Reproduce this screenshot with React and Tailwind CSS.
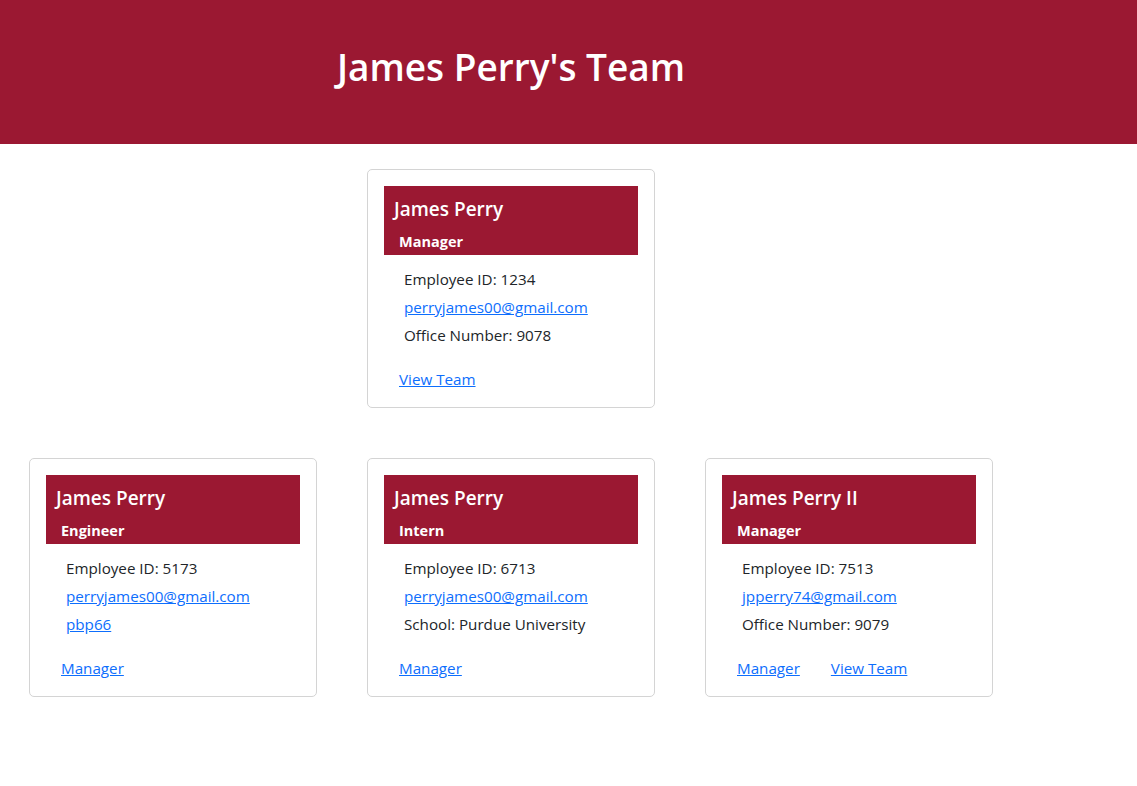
import React from 'react'

const MANAGER = {
  name: 'James Perry',
  role: 'Manager',
  id: '1234',
  email: 'perryjames00@gmail.com',
  extra: 'Office Number: 9078',
  links: ['View Team'],
}

const TEAM = [
  { name: 'James Perry', role: 'Engineer', id: '5173', email: 'perryjames00@gmail.com', github: 'pbp66', links: ['Manager'] },
  { name: 'James Perry', role: 'Intern', id: '6713', email: 'perryjames00@gmail.com', extra: 'School: Purdue University', links: ['Manager'] },
  { name: 'James Perry II', role: 'Manager', id: '7513', email: 'jpperry74@gmail.com', extra: 'Office Number: 9079', links: ['Manager', 'View Team'] },
]

function Card({ person }) {
  return (
    <div className="w-[288px] rounded-[5px] border border-[#d4d4d4] bg-white px-[16px] pt-[16px] pb-[14px]">
      <div className="bg-[#9b1832] px-[10px] pt-[10px] pb-[3px] text-white">
        <h2 className="text-[19px] font-semibold leading-[26px]">{person.name}</h2>
        <h3 className="mt-[10px] pl-[5px] text-[14.5px] font-bold leading-[20px]">{person.role}</h3>
      </div>
      <ul className="pt-[10px] pl-[20px] text-[15.2px] leading-[28px] text-[#212529]">
        <li>Employee ID: {person.id}</li>
        <li>
          <a href="#" className="text-[#0d6efd] underline">{person.email}</a>
        </li>
        {person.github ? (
          <li>
            <a href="#" className="text-[#0d6efd] underline">{person.github}</a>
          </li>
        ) : (
          <li>{person.extra}</li>
        )}
      </ul>
      <div className="mt-[16px] flex gap-[31px] pl-[15px] text-[15.2px] leading-[28px]">
        {person.links.map((l) => (
          <a key={l} href="#" className="text-[#0d6efd] underline">{l}</a>
        ))}
      </div>
    </div>
  )
}

export default function App() {
  return (
    <div className="min-h-screen bg-white font-['Open_Sans',sans-serif]">
      <header className="flex h-[144px] items-center bg-[#9b1832]">
        <h1 className="w-[1022px] pb-[10px] text-center text-[37px] font-semibold text-white">James Perry's Team</h1>
      </header>
      <main className="w-[1022px]">
        <div className="flex justify-center pt-[25px]">
          <Card person={MANAGER} />
        </div>
        <div className="flex gap-[50px] pt-[50px] pl-[29px]">
          {TEAM.map((p, i) => (
            <Card key={i} person={p} />
          ))}
        </div>
      </main>
    </div>
  )
}
